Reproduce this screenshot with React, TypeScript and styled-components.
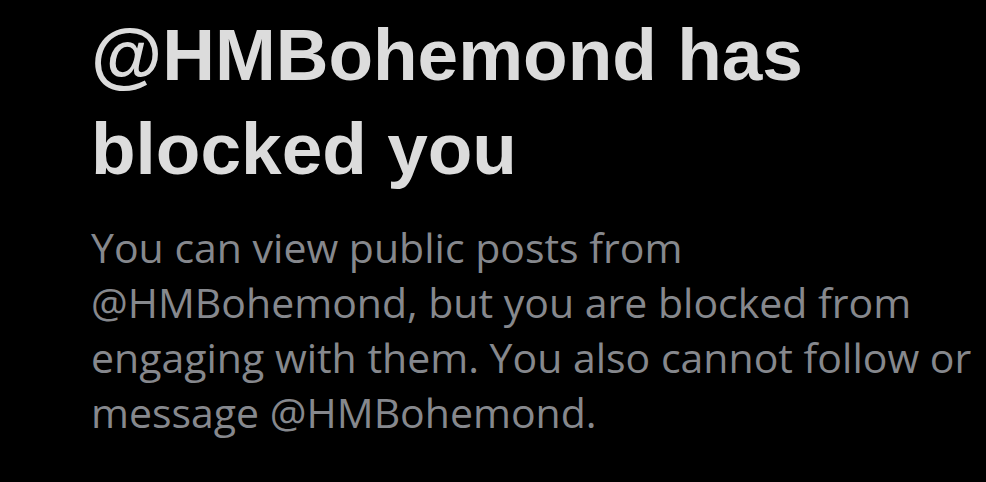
import React from "react";
import styled, { createGlobalStyle } from "styled-components";

const Global = createGlobalStyle`
  html, body { margin: 0; padding: 0; background: #000; }
  body { width: 986px; height: 482px; overflow: hidden; }
`;

const Page = styled.main`
  width: 986px;
  height: 482px;
  background: #000;
  box-sizing: border-box;
  padding: 8px 0 0 91px;
  display: flex;
  flex-direction: column;
`;

const Title = styled.h1`
  margin: 0;
  font-family: "Liberation Sans", Arial, sans-serif;
  font-weight: 700;
  font-size: 73px;
  line-height: 94px;
  color: #dcdcdc;
`;

const Body = styled.p`
  margin: 24px 0 0;
  font-family: "Open Sans", "Noto Sans", sans-serif;
  font-weight: 400;
  font-size: 41px;
  line-height: 55px;
  color: #86888d;
  width: 890px;
`;

export default function App() {
  return (
    <>
      <Global />
      <Page>
        <Title>
          @HMBohemond has
          <br />
          blocked you
        </Title>
        <Body>
          You can view public posts from
          <br />
          @HMBohemond, but you are blocked from
          <br />
          engaging with them. You also cannot follow or
          <br />
          message @HMBohemond.
        </Body>
      </Page>
    </>
  );
}
